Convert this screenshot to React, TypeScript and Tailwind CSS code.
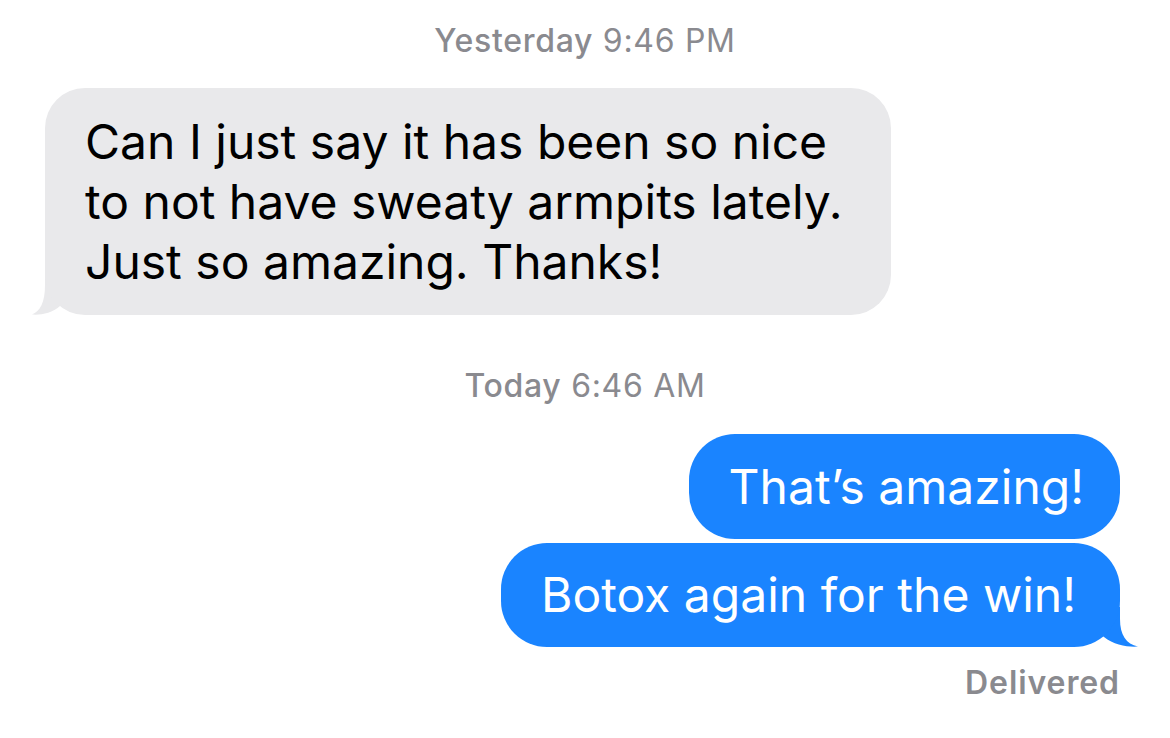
import React from 'react';

const font = { fontFamily: 'Inter, "Noto Sans", sans-serif' };

// bubble tails, drawn as if on the left; the blue one gets mirrored
function GrayTail() {
  return (
    <svg width="54" height="40" viewBox="0 0 54 40" className="absolute bottom-0 -left-[13px]">
      <path d="M13,0 L13,10 C13,28 8,36 0,39.6 C9,40.4 20,38 28,31 L40,18 L40,0 Z" fill="#e9e9eb" />
    </svg>
  );
}

function BlueTail() {
  return (
    <svg width="60" height="40" viewBox="0 0 60 40" className="absolute bottom-0 -right-[18px] -scale-x-100">
      <path d="M18,0 L18,12 C18,28 12,37 0,39.6 C10,40.4 24,38 34,30 L46,20 L46,0 Z" fill="#1a84ff" />
    </svg>
  );
}

function Stamp({ bold, rest }: { bold: string; rest: string }) {
  return (
    <div className="text-center text-[32px] leading-[42px] tracking-[0.7px] text-[#8a8a8f]">
      <span className="font-medium">{bold}</span> {rest}
    </div>
  );
}

export default function App() {
  return (
    <div className="w-[1170px] h-[738px] bg-white pt-[20px] overflow-hidden" style={font}>
      <Stamp bold="Yesterday" rest="9:46 PM" />

      <div className="mt-[26px] pl-[45px]">
        <div className="relative w-fit">
          <GrayTail />
          <div className="relative bg-[#e9e9eb] rounded-[40px] pl-[40px] pr-[48px] py-[23.5px] text-[48px] leading-[60px] text-black">
            <div>Can I just say it has been so nice</div>
            <div>to not have sweaty armpits lately.</div>
            <div>Just so amazing. Thanks!</div>
          </div>
        </div>
      </div>

      <div className="mt-[50px]">
        <Stamp bold="Today" rest="6:46 AM" />
      </div>

      <div className="flex flex-col items-end pr-[50px]">
        <div className="mt-[27px] bg-[#1a84ff] rounded-[46px] pl-[40px] pr-[36px] py-[22.5px] text-[48px] leading-[60px] text-white">
          That’s amazing!
        </div>
        <div className="relative mt-[4px]">
          <BlueTail />
          <div className="relative bg-[#1a84ff] rounded-[46px] pl-[40px] pr-[44px] py-[22px] text-[48px] leading-[60px] text-white">
            Botox again for the win!
          </div>
        </div>
        <div className="mt-[15px] text-[32px] leading-[42px] tracking-[0.9px] font-semibold text-[#8a8a8f]">Delivered</div>
      </div>
    </div>
  );
}
